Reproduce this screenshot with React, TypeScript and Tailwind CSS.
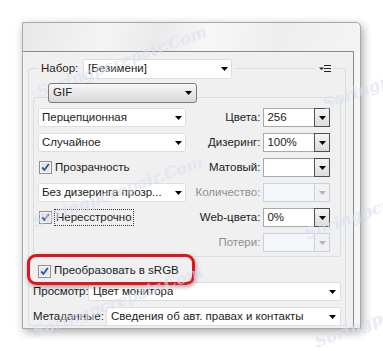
import React from 'react';

const Arrow = ({ color = '#000' }: { color?: string }) => (
    <svg width="7" height="4" viewBox="0 0 7 4" className="shrink-0">
        <path d="M0 0h7L3.5 4z" fill={color} />
    </svg>
);

const Check = () => (
    <svg width="13" height="13" viewBox="0 0 13 13" className="shrink-0">
        <rect x="0.5" y="0.5" width="12" height="12" fill="#f6f6f6" stroke="#8e8f8f" />
        <rect x="2" y="2" width="9" height="9" fill="#e4e6ea" />
        <path d="M3.2 6.4l2.2 2.6L9.8 3" stroke="#2c4b9c" strokeWidth="1.7" fill="none" />
    </svg>
);

function Field({ text, className = '' }: { text: string; className?: string }) {
    return (
        <div className={`flex h-[19px] items-center justify-between rounded-[2px] border border-[#dedede] bg-white pl-[3px] pr-[3px] ${className}`}>
            <span className="truncate">{text}</span>
            <Arrow />
        </div>
    );
}

function Combo({ value = '', disabled = false }: { value?: string; disabled?: boolean }) {
    return (
        <div className={`flex h-[19px] w-[68px] border ${disabled ? 'border-[#c2d3e8] bg-[#f4f6f9]' : 'border-[#a9a9a9] bg-white'}`}>
            <span className="flex-1 pl-[3px] leading-[17px]">{value}</span>
            <div
                className={`-my-px -mr-px flex w-[16px] items-center justify-center border ${
                    disabled ? 'border-[#c2d3e8] bg-[#f1f1f1]' : 'border-[#505050] bg-[linear-gradient(#f4f4f4,#dcdcdc)]'
                }`}
            >
                <Arrow color={disabled ? '#b4b4b4' : '#000'} />
            </div>
        </div>
    );
}

function Label({ text, disabled = false }: { text: string; disabled?: boolean }) {
    return <span className={`w-[76px] text-right ${disabled ? 'text-[#8f8f8f]' : ''}`}>{text}</span>;
}

const Watermark = ({ className }: { className: string }) => (
    <span
        className={`pointer-events-none absolute -rotate-[20deg] whitespace-nowrap font-['DejaVu_Serif',serif] text-[16px] font-bold italic text-[#d9e0f0] opacity-60 ${className}`}
    >
        Soringpcrepair.Com
    </span>
);

export default function App() {
    return (
        <div className="relative h-[351px] w-[383px] overflow-hidden bg-white pl-[22px] pt-[22px] font-['Liberation_Sans',Arial,sans-serif] text-[11.5px] text-[#1c1c1c]">
            <div className="flex h-[307px] w-[339px] flex-col rounded-tr-[5px] border border-[#a9a9a9] bg-[#f0f0f0] shadow-[2px_3px_10px_rgba(0,0,0,0.35)]">
                <div className="h-[28px] rounded-tr-[5px] bg-[linear-gradient(105deg,#e8e8e8_0%,#f4f4f4_25%,#eaeaea_40%,#f7f7f7_55%,#eeeeee_75%,#f4f4f4_100%)]" />
                <div className="flex flex-1">
                    <div className="w-[331px] border-r border-t border-[#8a8a8a] pl-[5px] pt-[16px]">
                        <div className="h-[258px] w-[318px] rounded-[3px] border border-[#d6dee6] px-[4px]">
                            {/* Набор */}
                            <div className="-mt-[10px] flex h-[20px] items-center">
                                <div className="ml-[5px] flex items-center bg-[#f0f0f0] px-[3px]">
                                    <span className="w-[42px]">Набор:</span>
                                    <Field text="[Безимени]" className="h-[20px] w-[149px] pl-[4px]" />
                                </div>
                                <div className="flex-1" />
                                <div className="mr-[8px] flex h-[9px] w-[17px] items-center justify-center bg-[#f0f0f0]">
                                    <svg width="12" height="8" viewBox="0 0 12 8">
                                        <path d="M0 2.5h5L2.5 5z" fill="#222" />
                                        <path d="M5 0.5h7M5 3.5h7M5 6.5h7" stroke="#222" strokeWidth="1" />
                                    </svg>
                                </div>
                            </div>
                            {/* GIF */}
                            <div className="relative z-10 ml-[15px] mt-[4px] flex h-[20px] w-[149px] items-center justify-between rounded-[3px] border border-[#7b7b7b] bg-[linear-gradient(#f6f6f6,#e8e8e8_50%,#d9d9d9)] pl-[4px] pr-[4px]">
                                <span>GIF</span>
                                <Arrow />
                            </div>
                            {/* inner box */}
                            <div className="-mt-[6px] w-[308px] rounded-[3px] border border-[#d6dee6] pb-[4px] pl-[4px] pr-[6px] pt-[10px]">
                                <div className="grid grid-cols-[148px_76px_68px] items-center gap-y-[6px] [&>*]:h-[19px]">
                                    <Field text="Перцепционная" />
                                    <div className="col-span-2 flex items-center justify-end gap-[3px]">
                                        <Label text="Цвета:" />
                                        <Combo value="256" />
                                    </div>
                                    <Field text="Случайное" />
                                    <div className="col-span-2 flex items-center justify-end gap-[3px]">
                                        <Label text="Дизеринг:" />
                                        <Combo value="100%" />
                                    </div>
                                    <div className="flex items-center gap-[3px] pl-[1px]">
                                        <Check />
                                        <span>Прозрачность</span>
                                    </div>
                                    <div className="col-span-2 flex items-center justify-end gap-[3px]">
                                        <Label text="Матовый:" />
                                        <Combo />
                                    </div>
                                    <Field text="Без дизеринга прозр..." />
                                    <div className="col-span-2 flex items-center justify-end gap-[3px]">
                                        <Label text="Количество:" disabled />
                                        <Combo disabled />
                                    </div>
                                    <div className="flex items-center gap-[2px] pl-[1px]">
                                        <Check />
                                        <span className="border border-dotted border-[#333] px-[1px] leading-[15px]">Нересстрочно</span>
                                    </div>
                                    <div className="col-span-2 flex items-center justify-end gap-[3px]">
                                        <Label text="Web-цвета:" />
                                        <Combo value="0%" />
                                    </div>
                                    <div />
                                    <div className="col-span-2 flex items-center justify-end gap-[3px]">
                                        <Label text="Потери:" disabled />
                                        <Combo disabled />
                                    </div>
                                </div>
                            </div>
                            {/* sRGB */}
                            <div className="relative ml-[5px] mt-[4px] flex h-[20px] items-center gap-[3px]">
                                <Check />
                                <span>Преобразовать в sRGB</span>
                                <div className="absolute -left-[11px] -top-[7px] h-[31px] w-[168px] rounded-[9px] border-[3px] border-[#e3121b] shadow-[1px_2px_4px_rgba(0,0,0,0.35)]" />
                            </div>
                            <div className="mt-[1px] flex h-[19px] items-center">
                                <span className="w-[55px]">Просмотр:</span>
                                <Field text="Цвет монитора" className="flex-1 pl-[4px] pr-[4px]" />
                            </div>
                            <div className="mt-[6px] flex h-[19px] items-center">
                                <span className="w-[73px]">Метаданные:</span>
                                <Field text="Сведения об авт. правах и контакты" className="flex-1 pl-[4px] pr-[4px]" />
                            </div>
                        </div>
                    </div>
                    <div className="flex-1 bg-[#f6f6f6]" />
                </div>
            </div>
            <Watermark className="left-[32px] top-[50px]" />
            <Watermark className="left-[318px] top-[62px]" />
            <Watermark className="left-[28px] top-[180px]" />
            <Watermark className="left-[300px] top-[192px]" />
            <Watermark className="left-[28px] top-[290px]" />
            <Watermark className="left-[310px] top-[300px]" />
        </div>
    );
}
